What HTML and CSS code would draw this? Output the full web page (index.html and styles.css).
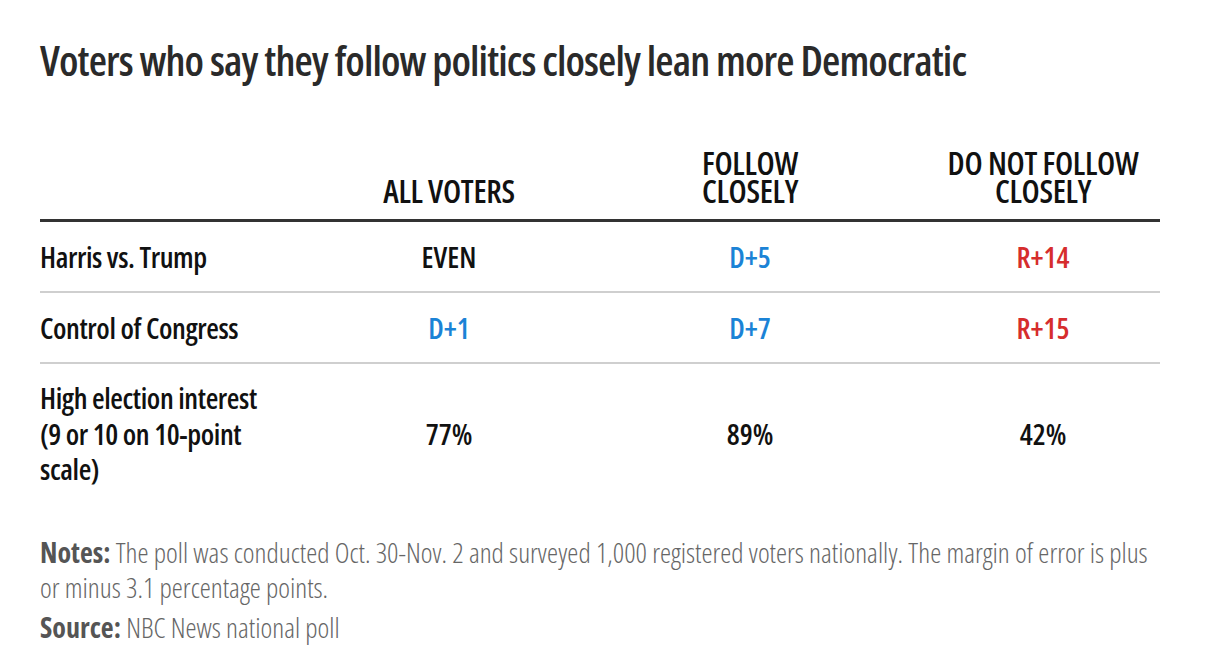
FILE: index.html
```html
<!DOCTYPE html>
<html>
<head>
<meta charset="utf-8">
<link rel="stylesheet" href="styles.css">
</head>
<body>
<div class="page">
  <h1 class="title">Voters who say they follow politics closely lean more Democratic</h1>
  <div class="table">
    <div class="row head">
      <div class="cell label"></div>
      <div class="cell c1">ALL VOTERS</div>
      <div class="cell c2">FOLLOW<br>CLOSELY</div>
      <div class="cell c3">DO NOT FOLLOW<br>CLOSELY</div>
    </div>
    <div class="row line">
      <div class="cell label">Harris vs. Trump</div>
      <div class="cell c1">EVEN</div>
      <div class="cell c2 dem">D+5</div>
      <div class="cell c3 rep">R+14</div>
    </div>
    <div class="row line">
      <div class="cell label">Control of Congress</div>
      <div class="cell c1 dem">D+1</div>
      <div class="cell c2 dem">D+7</div>
      <div class="cell c3 rep">R+15</div>
    </div>
    <div class="row tall">
      <div class="cell label">High election interest<br>(9 or 10 on 10-point<br>scale)</div>
      <div class="cell c1">77%</div>
      <div class="cell c2">89%</div>
      <div class="cell c3">42%</div>
    </div>
  </div>
  <div class="notes">
    <p><b>Notes:</b> The poll was conducted Oct. 30-Nov. 2 and surveyed 1,000 registered voters nationally. The margin of error is plus or minus 3.1 percentage points.</p>
    <p><b>Source:</b> NBC News national poll</p>
  </div>
</div>
</body>
</html>
```
FILE: styles.css
```css
html, body {
  margin: 0;
  padding: 0;
  background: #ffffff;
}
.page {
  width: 1120px;
  padding: 35px 0 0 40px;
  font-family: "Open Sans", "Roboto", sans-serif;
  font-stretch: 75%;
  color: #111;
}
.title {
  margin: 0;
  font-size: 42px;
  line-height: 50px;
  font-weight: 600;
  color: #2a2a2a;
  letter-spacing: -0.9px;
}
.table {
  margin-top: 64px;
}
.row {
  display: grid;
  grid-template-columns: 260px 298px 304px 258px;
}
.cell {
  font-size: 29px;
  line-height: 35.5px;
  font-weight: 600;
  color: #111;
}
.label {
  letter-spacing: -0.4px;
}
.c1, .c2, .c3 {
  text-align: center;
}
.c3 {
  padding-left: 24px;
}
.head {
  align-items: end;
  border-bottom: 3px solid #333;
  padding-bottom: 14px;
}
.head .cell {
  font-size: 32px;
  line-height: 28px;
  letter-spacing: -0.3px;
}
.line {
  align-items: center;
  height: 69px;
  border-bottom: 2px solid #cfcfcf;
}
.tall {
  align-items: center;
  padding: 16px 0 0 0;
}
.dem {
  color: #1b83d6;
}
.rep {
  color: #d62d2d;
}
.notes {
  margin-top: 48px;
  color: #666;
  font-size: 28px;
  line-height: 35px;
  font-weight: 300;
}
.notes p {
  margin: 0 0 5px 0;
}
.notes b {
  font-weight: 700;
  color: #555;
}
```
